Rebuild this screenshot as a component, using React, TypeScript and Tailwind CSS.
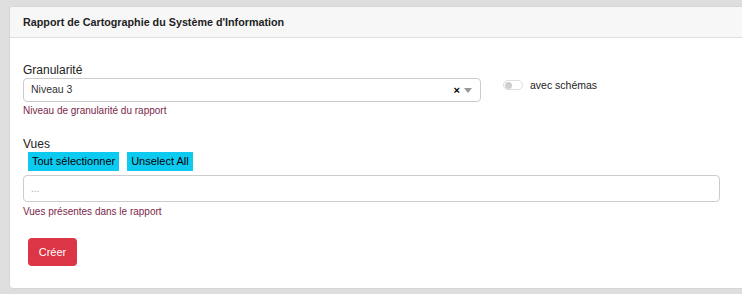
const font = { fontFamily: '"Liberation Sans", Arial, sans-serif' };

export default function App() {
  return (
    <div className="w-[742px] h-[294px] overflow-hidden bg-[#dedede] pt-[6px] pl-[9px]" style={font}>
      <div className="w-[760px] h-[283px] bg-white rounded-[4px] border border-[#d6d6d6] overflow-hidden">
        <div className="h-[31px] bg-[#f7f7f7] border-b border-[#e0e0e0] px-[13px] flex items-center">
          <h1 className="text-[10.75px] font-bold text-[#222]">Rapport de Cartographie du Système d'Information</h1>
        </div>
        <div className="px-[13px] pt-[24px] text-[12px] text-[#222]">
          <div className="flex items-start">
            <div className="w-[458px]">
              <label className="block leading-[16px]">Granularité</label>
              <div className="h-[24px] border border-[#cccccc] rounded-[4px] flex items-center pl-[7px] pr-[8px]">
                <span className="flex-1 text-[#333] text-[10.5px]">Niveau 3</span>
                <span className="text-[11px] font-bold text-black leading-none mr-[4px]">×</span>
                <span className="w-0 h-0 border-l-[4px] border-r-[4px] border-t-[5px] border-l-transparent border-r-transparent border-t-[#999]"></span>
              </div>
              <p className="leading-[15px] mt-[1px] text-[10px] text-[#7b1f4a]">Niveau de granularité du rapport</p>
            </div>
            <div className="ml-[22px] mt-[16px] h-[14px] flex items-center">
              <span className="w-[20px] h-[10px] rounded-full border border-[#dddddd] bg-white flex items-center pl-[1px]">
                <span className="w-[7px] h-[7px] rounded-full bg-[#cfcfcf]"></span>
              </span>
              <span className="ml-[7px] leading-[14px] text-[10.5px]">avec schémas</span>
            </div>
          </div>
          <div className="mt-[19px]">
            <label className="block leading-[14px]">Vues</label>
            <div className="flex gap-[8px] ml-[5px] mt-[1px]">
              <button className="h-[19px] px-[4px] bg-[#0dcaf0] text-black text-[11px] leading-[19px]">Tout sélectionner</button>
              <button className="h-[19px] px-[4px] bg-[#0dcaf0] text-black text-[11px] leading-[19px]">Unselect All</button>
            </div>
            <div className="w-[697px] h-[27px] mt-[4px] border border-[#cccccc] rounded-[4px] flex items-center pl-[7px] text-[#aaa] text-[10px]">...</div>
            <p className="leading-[15px] mt-[2px] text-[10px] text-[#7b1f4a]">Vues présentes dans le rapport</p>
          </div>
          <button className="mt-[19px] ml-[5px] w-[49px] h-[28px] rounded-[4px] bg-[#dc3545] text-white text-[11px]">Créer</button>
        </div>
      </div>
    </div>
  );
}
